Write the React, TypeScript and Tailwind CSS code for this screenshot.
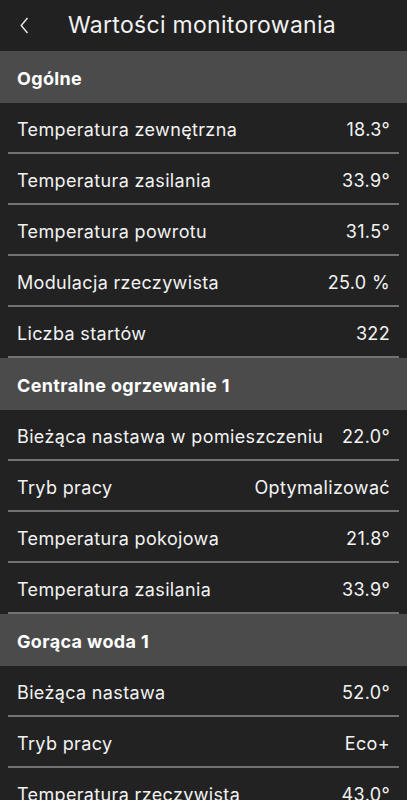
import React from "react";

type Row = { label: string; value: string };
type Section = { title: string; rows: Row[] };

const sections: Section[] = [
  {
    title: "Ogólne",
    rows: [
      { label: "Temperatura zewnętrzna", value: "18.3°" },
      { label: "Temperatura zasilania", value: "33.9°" },
      { label: "Temperatura powrotu", value: "31.5°" },
      { label: "Modulacja rzeczywista", value: "25.0 %" },
      { label: "Liczba startów", value: "322" },
    ],
  },
  {
    title: "Centralne ogrzewanie 1",
    rows: [
      { label: "Bieżąca nastawa w pomieszczeniu", value: "22.0°" },
      { label: "Tryb pracy", value: "Optymalizować" },
      { label: "Temperatura pokojowa", value: "21.8°" },
      { label: "Temperatura zasilania", value: "33.9°" },
    ],
  },
  {
    title: "Gorąca woda 1",
    rows: [
      { label: "Bieżąca nastawa", value: "52.0°" },
      { label: "Tryb pracy", value: "Eco+" },
      { label: "Temperatura rzeczywista", value: "43.0°" },
    ],
  },
];

export default function App() {
  return (
    <div
      className="w-[407px] h-[800px] overflow-hidden bg-[#222222] text-[#f2f2f2]"
      style={{ fontFamily: "Inter, 'Noto Sans', sans-serif" }}
    >
      <div className="h-[51px] flex items-center bg-[#212121]">
        <div className="w-[68px] flex items-center pl-[20px]">
          <svg width="9" height="17" viewBox="0 0 9 17" fill="none">
            <path d="M7.5 1 L1.2 8.5 L7.5 16" stroke="#e8e8e8" strokeWidth="1.4" />
          </svg>
        </div>
        <div className="text-[23px] tracking-[0.3px] text-[#f2f2f2] leading-none">Wartości monitorowania</div>
      </div>
      {sections.map((s) => (
        <div key={s.title}>
          <div className="h-[52px] bg-[#4b4b4b] flex items-center px-[17px] pt-[3px] text-[18px] tracking-[0.35px] font-bold text-white">
            {s.title}
          </div>
          {s.rows.map((r, i) => (
            <div key={i} className="px-[8px]">
              <div className="h-[51px] flex items-center justify-between px-[9px] pt-[3px] border-b-2 border-[#727272] text-[18px] tracking-[0.35px]">
                <span>{r.label}</span>
                <span>{r.value}</span>
              </div>
            </div>
          ))}
        </div>
      ))}
    </div>
  );
}
